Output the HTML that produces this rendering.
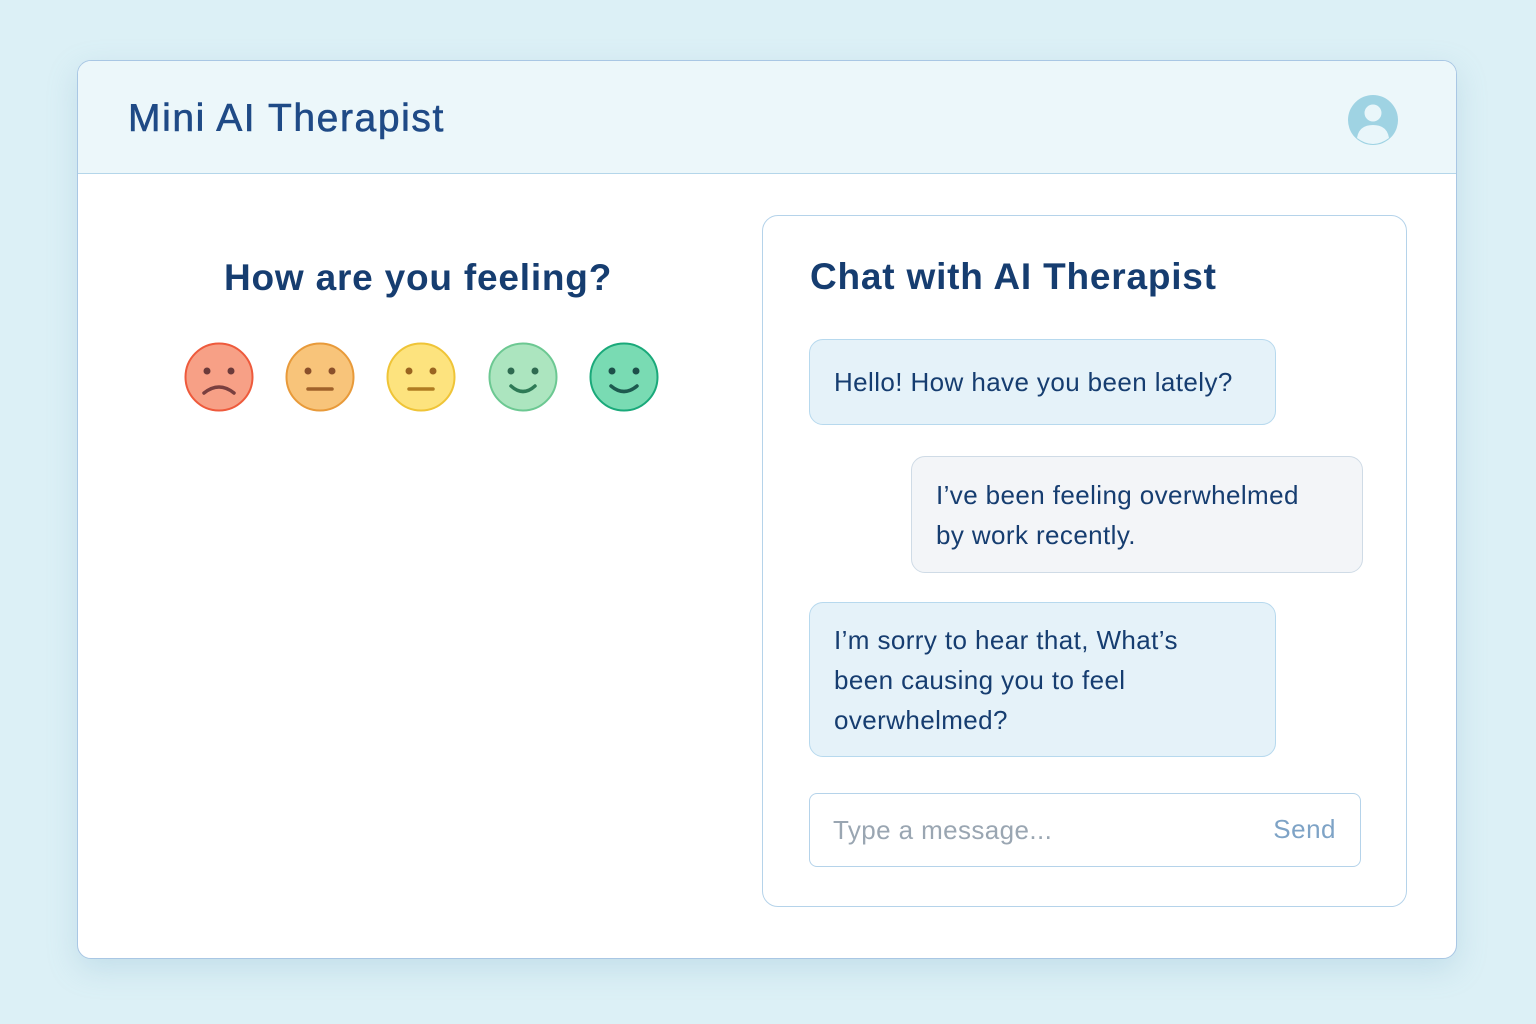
<!DOCTYPE html>
<html><head><meta charset="utf-8"><style>
*{box-sizing:border-box;margin:0;padding:0}
body{width:1536px;height:1024px;background:#dcf0f6;font-family:"Liberation Sans",sans-serif;position:relative;overflow:hidden}
.card{position:absolute;left:77px;top:60px;width:1380px;height:899px;background:#fff;border:1px solid #a9c7e4;border-radius:14px;box-shadow:0 10px 30px rgba(120,170,200,.25);overflow:hidden}
.hdr{height:113px;background:#ecf7fa;border-bottom:1px solid #b4d6ea;position:relative}
.hdr h1{position:absolute;left:50px;top:36px;font-size:39px;font-weight:normal;color:#1f4a86;letter-spacing:1.6px;-webkit-text-stroke:.6px #1f4a86}
.t{position:absolute;color:#163d70;font-size:37px;font-weight:bold;letter-spacing:.8px}
.chat{position:absolute;left:684px;top:154px;width:645px;height:692px;border:1px solid #b5d3ea;border-radius:16px}
.b{position:absolute;border:1px solid #b7d9ee;border-radius:14px;font-size:26px;color:#163d70;line-height:40px;padding:0 24px;letter-spacing:.4px;white-space:nowrap}
.in{position:absolute;left:46px;top:577px;width:552px;height:74px;border:1px solid #b5d3ea;border-radius:8px;font-size:26px}
</style></head><body>
<div class="card">
<div class="hdr"><h1>Mini AI Therapist</h1>
<svg style="position:absolute;left:1269px;top:33px" width="52" height="52" viewBox="0 0 52 52"><circle cx="26" cy="26" r="25" fill="#9fd3e3"/><circle cx="26" cy="19" r="8.5" fill="#e9f6fa"/><path d="M10 44 Q12 31 26 31 Q40 31 42 44 Q34 50 26 50 Q18 50 10 44Z" fill="#e9f6fa"/></svg>
</div>
<div class="t" style="left:146px;top:196px">How are you feeling?</div>
<svg style="position:absolute;left:100px;top:275px" width="490" height="80" viewBox="0 0 490 80">
<g transform="translate(41,41)"><circle r="33.5" fill="#f7a086" stroke="#ee5a3c" stroke-width="2"/><circle cx="-12" cy="-6" r="3.5" fill="#6b3a3a"/><circle cx="12" cy="-6" r="3.5" fill="#6b3a3a"/><path d="M-15 16 Q0 4 15 16" stroke="#7a3f3f" stroke-width="3.5" fill="none" stroke-linecap="round"/></g>
<g transform="translate(142,41)"><circle r="33.5" fill="#f8c47a" stroke="#e89a3a" stroke-width="2"/><circle cx="-12" cy="-6" r="3.5" fill="#8a4f2a"/><circle cx="12" cy="-6" r="3.5" fill="#8a4f2a"/><path d="M-12 12 H12" stroke="#a0612a" stroke-width="3.5" stroke-linecap="round"/></g>
<g transform="translate(243,41)"><circle r="33.5" fill="#fde37e" stroke="#efc437" stroke-width="2"/><circle cx="-12" cy="-6" r="3.5" fill="#9a6420"/><circle cx="12" cy="-6" r="3.5" fill="#9a6420"/><path d="M-12 12 H12" stroke="#b07c22" stroke-width="3.5" stroke-linecap="round"/></g>
<g transform="translate(345,41)"><circle r="33.5" fill="#ace5bf" stroke="#6cc892" stroke-width="2"/><circle cx="-12" cy="-6" r="3.5" fill="#2e6a50"/><circle cx="12" cy="-6" r="3.5" fill="#2e6a50"/><path d="M-12 9 Q0 20 12 9" stroke="#2e7a56" stroke-width="3.5" fill="none" stroke-linecap="round"/></g>
<g transform="translate(446,41)"><circle r="33.5" fill="#79dbb3" stroke="#1aa97a" stroke-width="2"/><circle cx="-12" cy="-6" r="3.5" fill="#1d4f4a"/><circle cx="12" cy="-6" r="3.5" fill="#1d4f4a"/><path d="M-13 9 Q0 20 13 9" stroke="#1d5a4f" stroke-width="3.5" fill="none" stroke-linecap="round"/></g>
</svg>
<div class="chat">
<div class="t" style="left:47px;top:40px">Chat with AI Therapist</div>
<div class="b" style="left:46px;top:123px;width:467px;height:86px;background:#e5f2f9;padding-top:22px">Hello! How have you been lately?</div>
<div class="b" style="left:148px;top:240px;width:452px;height:117px;background:#f3f5f8;border-color:#cfdbe6;padding-top:18px">I’ve been feeling overwhelmed<br>by work recently.</div>
<div class="b" style="left:46px;top:386px;width:467px;height:155px;background:#e5f2f9;padding-top:17px">I’m sorry to hear that, What’s<br>been causing you to feel<br>overwhelmed?</div>
<div class="in"><span style="position:absolute;left:23px;top:21px;color:#9aa6b2;letter-spacing:.4px">Type a message...</span><span style="position:absolute;right:24px;top:20px;color:#7ea3c6;letter-spacing:.5px">Send</span></div>
</div>
</div>
</body></html>
